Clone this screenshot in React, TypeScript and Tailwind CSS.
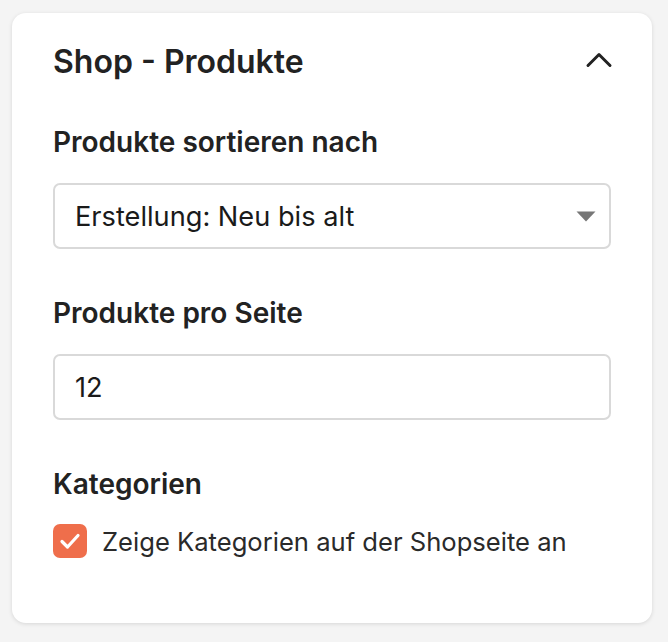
import { FC } from "react"

const ChevronUp: FC = () => (
  <svg width="28" height="18" viewBox="0 0 28 18" fill="none">
    <path
      d="M3 15.5L14 4.5L25 15.5"
      stroke="#222222"
      strokeWidth="3"
      strokeLinecap="round"
      strokeLinejoin="round"
    />
  </svg>
)

const CaretDown: FC = () => (
  <svg width="20" height="11" viewBox="0 0 20 11">
    <path d="M0.5 0.5H19.5L10 10.5Z" fill="#777777" />
  </svg>
)

const Check: FC = () => (
  <svg width="22" height="18" viewBox="0 0 22 18" fill="none">
    <path
      d="M3 9.5L8.5 15L19 3.5"
      stroke="white"
      strokeWidth="3.2"
      strokeLinecap="round"
      strokeLinejoin="round"
    />
  </svg>
)

export default function App() {
  return (
    <div
      className="min-h-[642px] w-[668px] bg-[#f4f4f4] pt-[13px] pl-[12px]"
      style={{ fontFamily: "Inter, 'Noto Sans', sans-serif" }}
    >
      <div className="w-[640px] h-[610px] rounded-[14px] bg-white shadow-[0_1px_4px_rgba(0,0,0,0.12)] pt-[31px] pl-[41px] pr-[41px] pb-[65px] flex flex-col">
        {/* Header */}
        <div className="flex items-center justify-between h-[36px]">
          <h2 className="text-[32px] leading-[36px] font-semibold text-[#222222]">
            Shop - Produkte
          </h2>
          <span className="mr-[-2px] mt-[-6px]">
            <ChevronUp />
          </span>
        </div>

        {/* Sortierung */}
        <div className="mt-[46px] text-[28px] leading-[32px] font-semibold text-[#222222]">
          Produkte sortieren nach
        </div>
        <div className="mt-[25px] h-[66px] w-[558px] rounded-[7px] border-2 border-[#d9d9d9] flex items-center justify-between pl-[20px] pr-[13px]">
          <span className="text-[27.2px] leading-[32px] text-[#1a1a1a] mt-[2px]">
            Erstellung: Neu bis alt
          </span>
          <span className="mt-[1px]">
            <CaretDown />
          </span>
        </div>

        {/* Produkte pro Seite */}
        <div className="mt-[48px] text-[28px] leading-[32px] font-semibold text-[#222222]">
          Produkte pro Seite
        </div>
        <div className="mt-[25px] h-[66px] w-[558px] rounded-[7px] border-2 border-[#d9d9d9] flex items-center pl-[20px]">
          <span className="text-[27.2px] leading-[32px] text-[#1a1a1a] mt-[2px]">12</span>
        </div>

        {/* Kategorien */}
        <div className="mt-[48px] text-[28px] leading-[32px] font-semibold text-[#222222]">
          Kategorien
        </div>
        <label className="mt-[24px] flex items-center gap-[15px]">
          <span className="w-[34px] h-[34px] rounded-[7px] bg-[#ef6e4b] flex items-center justify-center">
            <Check />
          </span>
          <span className="text-[25.6px] leading-[32px] text-[#2a2a2a] mt-[1px]">
            Zeige Kategorien auf der Shopseite an
          </span>
        </label>
      </div>
    </div>
  )
}
